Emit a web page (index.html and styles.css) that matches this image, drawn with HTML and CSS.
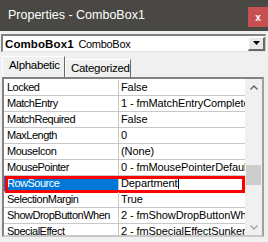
FILE: index.html
```html
<!DOCTYPE html>
<html lang="en">
<head>
  <meta charset="UTF-8">
  <title>Properties - ComboBox1</title>
  <link rel="stylesheet" href="styles.css">
</head>
<body>

  <div class="titlebar">
    <span class="title">Properties - ComboBox1</span>
    <span class="close">x</span>
  </div>

  <div class="objbox">
    <span class="objname"><b>ComboBox1</b> ComboBox</span>
    <span class="dropbtn">
      <svg width="7" height="4" viewBox="0 0 7 4"><path d="M0 0h7L3.5 4z" fill="#000"/></svg>
    </span>
  </div>

  <div class="tabs">
    <div class="tab active">Alphabetic</div>
    <div class="tab">Categorized</div>
  </div>

  <div class="grid">
    <div class="rows">
      <div class="row"><div class="name">Locked</div><div class="val">False</div></div>
      <div class="row"><div class="name">MatchEntry</div><div class="val">1 - fmMatchEntryComplete</div></div>
      <div class="row"><div class="name">MatchRequired</div><div class="val">False</div></div>
      <div class="row"><div class="name">MaxLength</div><div class="val">0</div></div>
      <div class="row"><div class="name">MouseIcon</div><div class="val">(None)</div></div>
      <div class="row"><div class="name">MousePointer</div><div class="val">0 - fmMousePointerDefault</div></div>
      <div class="row sel"><div class="name">RowSource</div><div class="val">Department<span class="caret"></span></div></div>
      <div class="row"><div class="name">SelectionMargin</div><div class="val">True</div></div>
      <div class="row"><div class="name">ShowDropButtonWhen</div><div class="val">2 - fmShowDropButtonWhenFocus</div></div>
      <div class="row"><div class="name">SpecialEffect</div><div class="val">2 - fmSpecialEffectSunken</div></div>
    </div>
    <div class="scrollbar">
      <div class="sbtn">
        <svg width="8" height="5" viewBox="0 0 8 5"><path d="M0.5 4.5L4 1L7.5 4.5" fill="none" stroke="#606060" stroke-width="1.4"/></svg>
      </div>
      <div class="track"><div class="thumb"></div></div>
      <div class="sbtn">
        <svg width="8" height="5" viewBox="0 0 8 5"><path d="M0.5 0.5L4 4L7.5 0.5" fill="none" stroke="#a0a0a0" stroke-width="1.4"/></svg>
      </div>
    </div>
  </div>

</body>
</html>
```

FILE: styles.css
```css
body {
  margin: 0;
  width: 268px;
  height: 242px;
  overflow: hidden;
  background: #f0f0f0;
  color: #000;
  font-family: "Liberation Sans", Arial, sans-serif;
  font-size: 11px;
}

.titlebar {
  height: 31px;
  background: #4a4845;
  display: flex;
  justify-content: space-between;
  align-items: center;
  padding-left: 8px;
}

.title {
  color: #fff;
  font-size: 12.5px;
  margin-top: -1px;
}

.close {
  align-self: flex-start;
  margin-top: 7px;
  width: 20px;
  height: 20px;
  background: #c75050;
  color: #fff;
  font-weight: bold;
  font-size: 10px;
  display: flex;
  align-items: center;
  justify-content: center;
}

.objbox {
  margin: 3px 2px 0 1px;
  height: 18px;
  box-sizing: border-box;
  background: #fff;
  border-top: 2px solid #828282;
  border-left: 2px solid #828282;
  border-right: 1px solid #c8c8c8;
  border-bottom: 1px solid #e3e3e3;
  display: flex;
  align-items: center;
  justify-content: space-between;
  padding-left: 2px;
}

.objname {
  font-size: 11px;
  letter-spacing: -0.3px;
}

.objname b {
  font-size: 11.5px;
  letter-spacing: 0.1px;
  margin-right: 2px;
}

.dropbtn {
  width: 17px;
  height: 14px;
  box-sizing: border-box;
  background: #e9e9e9;
  border-top: 1px solid #fff;
  border-left: 1px solid #fff;
  border-right: 2px solid #696969;
  border-bottom: 2px solid #696969;
  display: flex;
  align-items: center;
  justify-content: center;
}

.tabs {
  display: flex;
  align-items: flex-end;
  height: 21px;
  margin-top: 4px;
  padding-left: 2px;
}

.tab {
  box-sizing: border-box;
  height: 18px;
  width: 66px;
  padding-left: 5px;
  line-height: 17px;
  border-top: 1px solid #fff;
  border-left: 1px solid #fff;
  border-right: 1px solid #696969;
  font-size: 11.5px;
  letter-spacing: -0.3px;
}

.tab.active {
  height: 21px;
  width: 63px;
  line-height: 17px;
  padding-left: 6px;
}

.grid {
  display: flex;
  width: 262px;
  height: 160px;
  margin-left: 2px;
  box-sizing: border-box;
  border-top: 2px solid #828282;
  border-left: 2px solid #828282;
  border-right: 2px solid #a0a0a0;
  border-bottom: 2px solid #c8c8c8;
  overflow: hidden;
}

.rows {
  flex: 1;
  background: #fff;
  padding-top: 1px;
  overflow: hidden;
}

.row {
  position: relative;
  display: flex;
  height: 16px;
  box-sizing: border-box;
  border-bottom: 1px solid #c8c8c8;
  line-height: 15px;
  white-space: nowrap;
}

.name {
  width: 115px;
  flex: none;
  box-sizing: border-box;
  padding-left: 3px;
  border-right: 1px solid #c8c8c8;
  overflow: hidden;
  letter-spacing: -0.5px;
}

.val {
  flex: 1;
  padding-left: 2px;
  overflow: hidden;
  letter-spacing: -0.1px;
}

.row.sel .name {
  background: #0078d7;
  color: #fff;
}

.row.sel::after {
  content: "";
  position: absolute;
  top: 0;
  left: 1px;
  right: 0;
  bottom: -2px;
  border: 3px solid #f00;
}

.caret {
  display: inline-block;
  width: 1px;
  height: 12px;
  background: #000;
  vertical-align: -2px;
  margin-left: 1px;
}

.scrollbar {
  width: 17px;
  flex: none;
  display: flex;
  flex-direction: column;
  background: #f0f0f0;
}

.sbtn {
  height: 16px;
  flex: none;
  display: flex;
  align-items: center;
  justify-content: center;
}

.track {
  flex: 1;
}

.thumb {
  margin: 70px 1px 0;
  height: 20px;
  background: #cdcdcd;
}
```
